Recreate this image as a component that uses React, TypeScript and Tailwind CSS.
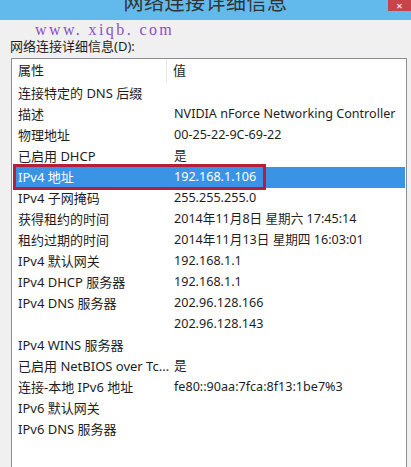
import React from 'react';

const rows: [string, string][] = [
  ['连接特定的 DNS 后缀', ''],
  ['描述', 'NVIDIA nForce Networking Controller'],
  ['物理地址', '00-25-22-9C-69-22'],
  ['已启用 DHCP', '是'],
  ['IPv4 地址', '192.168.1.106'],
  ['IPv4 子网掩码', '255.255.255.0'],
  ['获得租约的时间', '2014年11月8日 星期六 17:45:14'],
  ['租约过期的时间', '2014年11月13日 星期四 16:03:01'],
  ['IPv4 默认网关', '192.168.1.1'],
  ['IPv4 DHCP 服务器', '192.168.1.1'],
  ['IPv4 DNS 服务器', '202.96.128.166'],
  ['', '202.96.128.143'],
  ['IPv4 WINS 服务器', ''],
  ['已启用 NetBIOS over Tc...', '是'],
  ['连接-本地 IPv6 地址', 'fe80::90aa:7fca:8f13:1be7%3'],
  ['IPv6 默认网关', ''],
  ['IPv6 DNS 服务器', ''],
];

export default function App() {
  return (
    <div className="w-[411px] h-[467px] overflow-hidden bg-[#f0f0f0] flex flex-col font-['Noto_Sans','Noto_Sans_CJK_SC',sans-serif] text-[13px] text-[#1e1e1e]">
      {/* Title bar */}
      <div className="relative h-[20px] bg-[#62b9eb] shrink-0 flex justify-center">
        <span className="text-[20px] leading-none -mt-[7px] text-[#333] tracking-wide">网络连接详细信息</span>
        <div className="absolute right-0 top-0 w-[23px] h-[11px] bg-[#c7454a] flex items-center justify-center text-white text-[11px] leading-none">×</div>
      </div>

      {/* Watermark */}
      <div className="relative h-0">
        <span className="absolute left-[35px] top-[-2px] font-['Liberation_Serif',serif] text-[16px] tracking-[2.4px] text-[#8b4ec6] whitespace-pre">www. xiqb. com</span>
      </div>

      <div className="pl-[10px] pt-[17px] h-[38px] leading-[18px]">网络连接详细信息(D):</div>

      {/* List box */}
      <div className="ml-[11px] w-[396px] flex-1 bg-white border border-[#8a8d93] border-b-0">
        <div className="flex h-[24px] items-center">
          <div className="w-[155px] pl-[6px] border-r border-[#e8e8e8] h-full flex items-center">属性</div>
          <div className="pl-[6px]">值</div>
        </div>
        {rows.map(([k, v], i) => {
          const sel = i === 4;
          return (
            <div key={i} className={`relative flex h-[21px] items-center whitespace-nowrap mx-[1px] ${sel ? 'bg-[#3b93e6] text-white' : ''}`}>
              <div className="w-[154px] pl-[5px]">{k}</div>
              <div className="pl-[7px] text-[12.6px]">{v}</div>
              {sel && (
                <div className="absolute left-0 top-[-3px] w-[253px] h-[26px] border-[3px] border-[#b4203a]" />
              )}
            </div>
          );
        })}
      </div>
    </div>
  );
}
